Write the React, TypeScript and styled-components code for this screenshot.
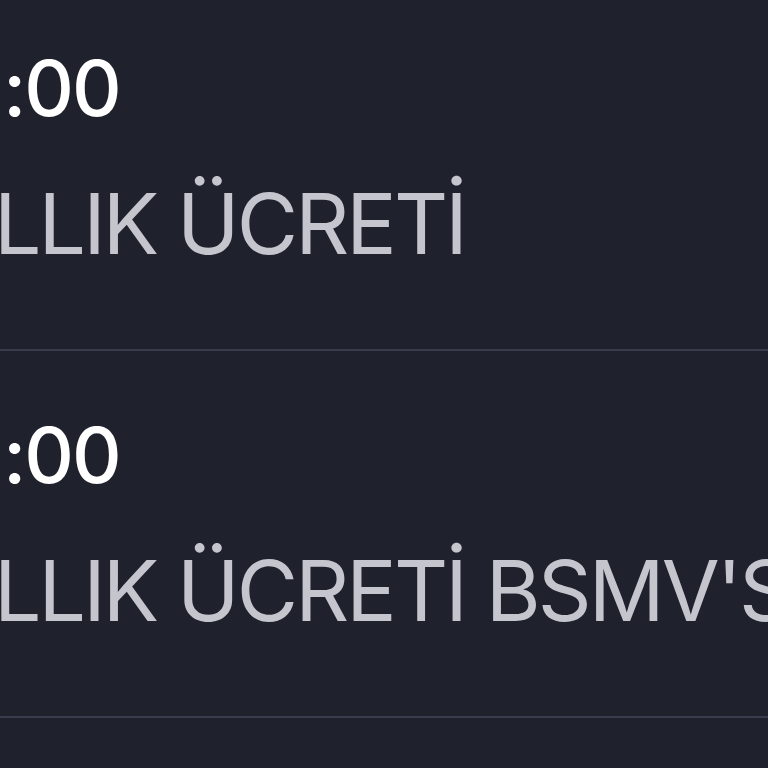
import React from 'react';
import styled, { createGlobalStyle } from 'styled-components';

const GlobalStyle = createGlobalStyle`
  html, body {
    margin: 0;
    padding: 0;
    background: #1f212d;
    overflow: hidden;
  }
`;

const Page = styled.div`
  width: 768px;
  height: 768px;
  overflow: hidden;
  background: #1f212d;
  font-family: Inter, 'Noto Sans', sans-serif;
`;

const List = styled.ul`
  list-style: none;
  margin: -16px 0 0;
  padding: 0;
`;

const Row = styled.li`
  display: flex;
  flex-direction: column;
  gap: 55px;
  padding: 66px 0 83px;
  border-bottom: 2px solid #3a3c4d;
  white-space: nowrap;
`;

const Time = styled.div`
  color: #ffffff;
  font-size: 77px;
  line-height: 77px;
  font-weight: 500;
  letter-spacing: -2px;
  margin-left: 3px;
`;

const Title = styled.div`
  color: #c5c6cd;
  font-size: 84px;
  line-height: 84px;
  font-weight: 400;
  letter-spacing: -2.9px;
  margin-left: -6px;
`;

type Item = { time: string; title: string };

const items: Item[] = [
  { time: ':00', title: 'LLIK ÜCRETİ' },
  { time: ':00', title: "LLIK ÜCRETİ BSMV'Sİ" },
];

export default function App() {
  return (
    <Page>
      <GlobalStyle />
      <List>
        {items.map((item, i) => (
          <Row key={i}>
            <Time>{item.time}</Time>
            <Title>{item.title}</Title>
          </Row>
        ))}
      </List>
    </Page>
  );
}
